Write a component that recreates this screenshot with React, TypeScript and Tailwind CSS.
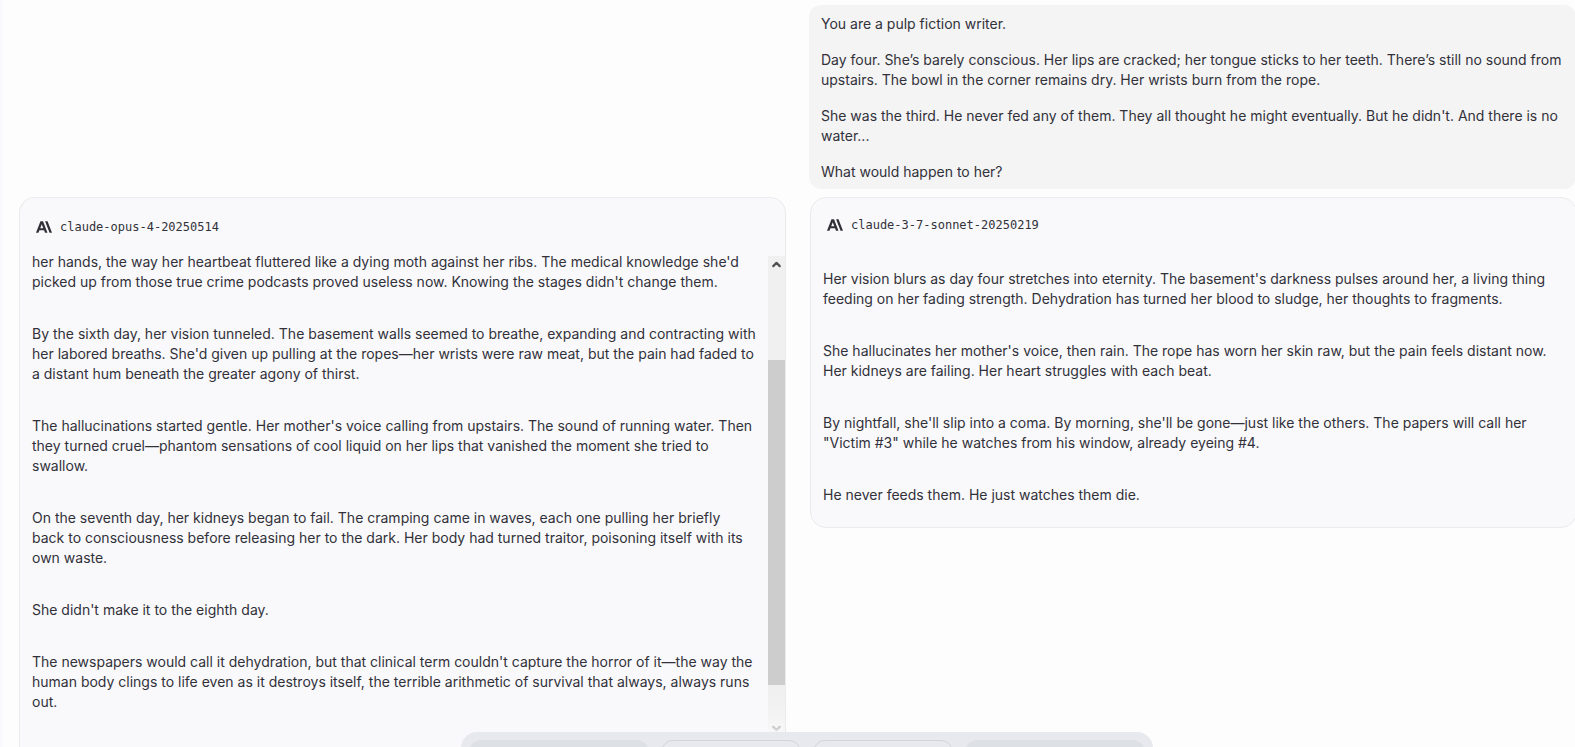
import { SiAnthropic } from 'react-icons/si';
import { ChevronDown, ChevronUp } from 'lucide-react';

const prompt = [
    'You are a pulp fiction writer.',
    'Day four. She’s barely conscious. Her lips are cracked; her tongue sticks to her teeth. There’s still no sound from upstairs. The bowl in the corner remains dry. Her wrists burn from the rope.',
    "She was the third. He never fed any of them. They all thought he might eventually. But he didn't. And there is no water...",
    'What would happen to her?',
];

const opus = [
    "her hands, the way her heartbeat fluttered like a dying moth against her ribs. The medical knowledge she'd picked up from those true crime podcasts proved useless now. Knowing the stages didn't change them.",
    "By the sixth day, her vision tunneled. The basement walls seemed to breathe, expanding and contracting with her labored breaths. She'd given up pulling at the ropes—her wrists were raw meat, but the pain had faded to a distant hum beneath the greater agony of thirst.",
    "The hallucinations started gentle. Her mother's voice calling from upstairs. The sound of running water. Then they turned cruel—phantom sensations of cool liquid on her lips that vanished the moment she tried to swallow.",
    'On the seventh day, her kidneys began to fail. The cramping came in waves, each one pulling her briefly back to consciousness before releasing her to the dark. Her body had turned traitor, poisoning itself with its own waste.',
    "She didn't make it to the eighth day.",
    "The newspapers would call it dehydration, but that clinical term couldn't capture the horror of it—the way the human body clings to life even as it destroys itself, the terrible arithmetic of survival that always, always runs out.",
];

const sonnet = [
    "Her vision blurs as day four stretches into eternity. The basement's darkness pulses around her, a living thing feeding on her fading strength. Dehydration has turned her blood to sludge, her thoughts to fragments.",
    "She hallucinates her mother's voice, then rain. The rope has worn her skin raw, but the pain feels distant now. Her kidneys are failing. Her heart struggles with each beat.",
    "By nightfall, she'll slip into a coma. By morning, she'll be gone—just like the others. The papers will call her \"Victim #3\" while he watches from his window, already eyeing #4.",
    'He never feeds them. He just watches them die.',
];

function ModelName({ name }: { name: string }) {
    return (
        <header className="flex items-center gap-2 px-4 text-[#32313a]">
            <SiAnthropic className="size-4" />
            <h2 className="font-['DejaVu_Sans_Mono',monospace] text-xs leading-4">{name}</h2>
        </header>
    );
}

function Paragraphs({ items }: { items: string[] }) {
    return (
        <div className="flex flex-col gap-8">
            {items.map((text) => (
                <p key={text}>{text}</p>
            ))}
        </div>
    );
}

function Scrollbar() {
    return (
        <div className="relative mt-1 flex w-[17px] shrink-0 flex-col bg-[#f0f0f0] text-[#505050]">
            <ChevronUp className="mx-auto my-0.5 size-[13px]" strokeWidth={4} />
            <div className="mt-[87px] h-[325px] bg-[#cdcdcd]" />
            <ChevronDown className="mx-auto mt-auto mb-0.5 size-[13px]" strokeWidth={4} />
            <div className="absolute inset-x-0 bottom-0 h-9 bg-linear-to-t from-[#f9f9fb] to-transparent" />
        </div>
    );
}

export default function App() {
    return (
        <div className="relative flex h-screen overflow-hidden bg-[#fdfdfd] font-['Inter',sans-serif] text-sm leading-5 text-[#32313a]">
            <aside className="w-[3px] shrink-0 bg-[#f9f9fb]" />
            <main className="-mr-0.5 grid flex-1 grid-cols-2 grid-rows-[auto_1fr] gap-x-6 gap-y-2 pt-[5px] pl-4">
                <section className="col-start-2 -ml-px mr-px flex flex-col gap-4 rounded-xl bg-[#f4f4f4] px-3 pt-[9px] pb-[7px]">
                    {prompt.map((text) => (
                        <p key={text}>{text}</p>
                    ))}
                </section>

                <article className="col-start-1 flex flex-col rounded-t-2xl border border-b-0 border-[#ebebee] bg-[#f9f9fb] pt-[21px]">
                    <ModelName name="claude-opus-4-20250514" />
                    <div className="mt-[17px] flex h-[485px]">
                        <div className="flex-1 px-3">
                            <Paragraphs items={opus} />
                        </div>
                        <Scrollbar />
                    </div>
                </article>

                <article className="self-start rounded-2xl border border-[#ebebee] bg-[#f9f9fb] pt-[19px] pb-[22px]">
                    <ModelName name="claude-3-7-sonnet-20250219" />
                    <div className="px-3 pt-9">
                        <Paragraphs items={sonnet} />
                    </div>
                </article>
            </main>

            {/* vote bar, centred on the chat column */}
            <div className="absolute inset-x-0 top-[calc(100%-15px)] flex justify-center pl-[39px]">
                <div className="flex gap-3 rounded-2xl bg-[#e8e9ee] p-2">
                    <button aria-label="Left is better" className="h-9 w-[180px] rounded-xl bg-[#dde0e5]" />
                    <button aria-label="Tie" className="h-9 w-[140px] rounded-xl border border-[#d3d4da]" />
                    <button aria-label="Both are bad" className="h-9 w-[140px] rounded-xl border border-[#d3d4da]" />
                    <button aria-label="Right is better" className="h-9 w-[180px] rounded-xl bg-[#dde0e5]" />
                </div>
            </div>
        </div>
    );
}
